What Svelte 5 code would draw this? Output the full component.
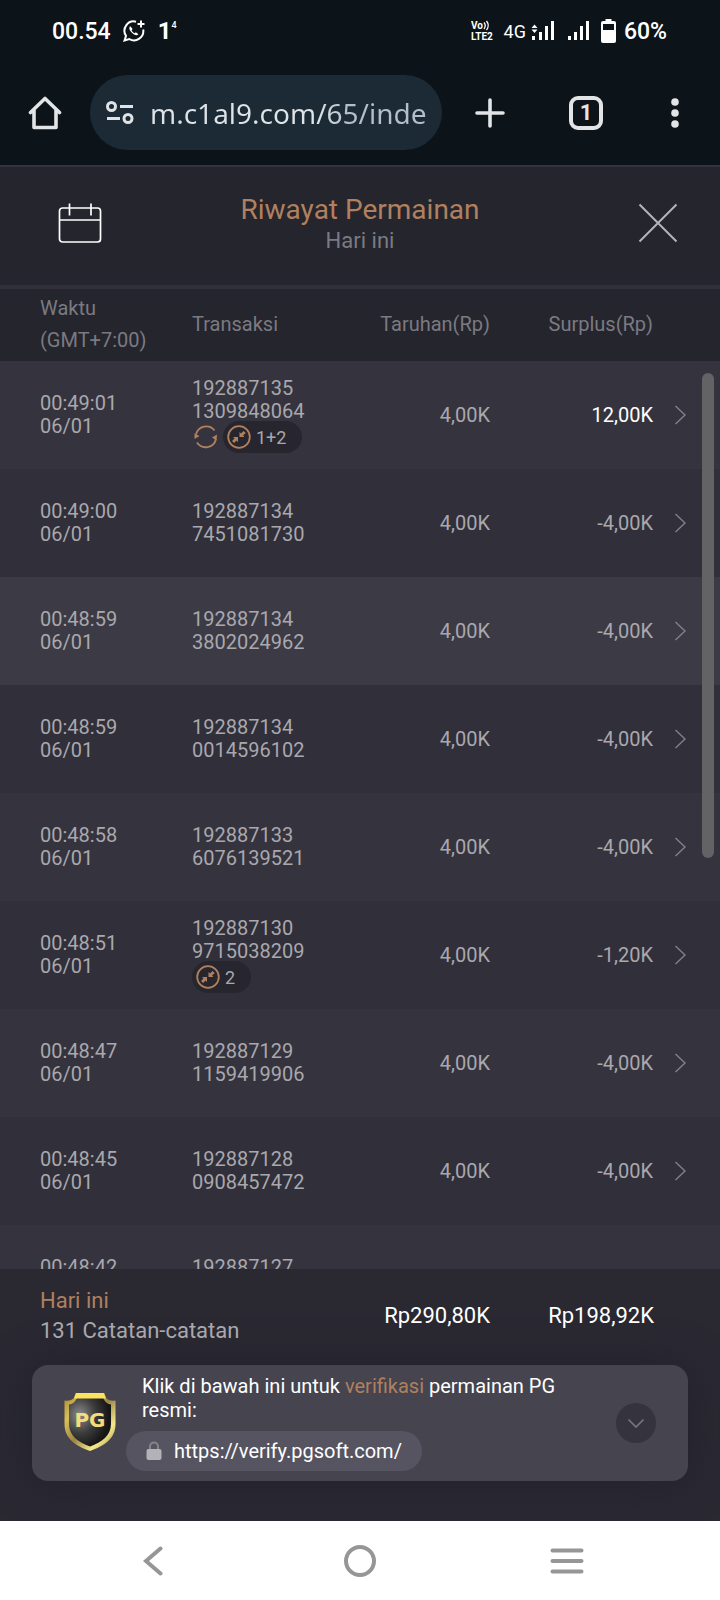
<script lang="ts">
  type Row = {
    time: string;
    date: string;
    id: [string, string];
    bet: string;
    profit: string;
    respin?: boolean;
    badge?: string;
  };

  const rows: Row[] = [
    { time: "00:49:01", date: "06/01", id: ["192887135", "1309848064"], bet: "4,00K", profit: "12,00K", respin: true, badge: "1+2" },
    { time: "00:49:00", date: "06/01", id: ["192887134", "7451081730"], bet: "4,00K", profit: "-4,00K" },
    { time: "00:48:59", date: "06/01", id: ["192887134", "3802024962"], bet: "4,00K", profit: "-4,00K" },
    { time: "00:48:59", date: "06/01", id: ["192887134", "0014596102"], bet: "4,00K", profit: "-4,00K" },
    { time: "00:48:58", date: "06/01", id: ["192887133", "6076139521"], bet: "4,00K", profit: "-4,00K" },
    { time: "00:48:51", date: "06/01", id: ["192887130", "9715038209"], bet: "4,00K", profit: "-1,20K", badge: "2" },
    { time: "00:48:47", date: "06/01", id: ["192887129", "1159419906"], bet: "4,00K", profit: "-4,00K" },
    { time: "00:48:45", date: "06/01", id: ["192887128", "0908457472"], bet: "4,00K", profit: "-4,00K" },
    { time: "00:48:42", date: "\u00a0", id: ["192887127", "\u00a0"], bet: "", profit: "" },
  ];

  let url = $state("m.c1al9.com/65/inde");
  let selected = $state(2);
</script>

<div class="screen">
  <div class="status-bar">
    <span class="clock">00.54</span>
    <svg class="whatsapp" width="22" height="22" viewBox="0 0 22 22" fill="none" stroke="#fff" stroke-width="2">
      <path d="M13 1.7A9.3 9.3 0 0 0 3 15.800L1.500 20.500L6.300 19A9.300 9.300 0 0 0 20.200 9.500" />
      <path d="M18 0.500v7M14.500 4h7" />
      <path d="M7.300 6.300c-1.800 1.500-.8 4.200 1.600 6.500s4.900 3.300 6.500 1.500l-2.500-2-1.300 1c-1.200-.5-2.500-1.800-3-3l1-1.200z" fill="#fff" stroke="none" />
    </svg>
    <span class="speed">1<sup>4</sup></span>

    <svg class="volte" width="25" height="22" viewBox="0 0 25 22">
      <text x="0" y="9">Vo</text>
      <text x="0" y="20">LTE2</text>
      <path d="M13 2.500q2.500 3 0 6.500M15.500 1q3.500 4.500 0 9" fill="none" stroke="#fff" stroke-width="1.300" />
    </svg>
    <span class="network">4G</span>
    <svg class="signal-a" width="22" height="20" viewBox="0 0 22 20" fill="#fff">
      <path d="M2.500 3.500l3 3.500h-6zM2.500 12l3-3.500h-6z" />
      <path d="M0 15h3v4H0zM7 11h3v8H7zM13 5h3v14h-3zM19 0h3v19h-3z" />
    </svg>
    <svg class="signal-b" width="22" height="20" viewBox="0 0 22 20" fill="#fff">
      <path d="M0 15h3v4H0zM6 11h3v8H6zM12 5h3v14h-3zM18 0h3v19h-3z" />
    </svg>
    <svg class="battery" width="15" height="24" viewBox="0 0 15 24">
      <rect x="4.500" y="0" width="6" height="4" fill="#fff" />
      <rect x="0" y="2" width="15" height="22" rx="2" fill="#fff" />
      <rect x="2" y="5" width="11" height="6" fill="#0c1319" />
    </svg>
    <span class="clock">60%</span>
  </div>

  <div class="toolbar">
    <button class="home" aria-label="Home">
      <svg width="34" height="36" viewBox="0 0 34 36" fill="none" stroke="#e2e4e6" stroke-width="3.600" stroke-linejoin="round" stroke-linecap="round">
        <path d="M2.500 17.500L17 3.500L31.500 17.500M6 15v17.500h22V15" />
      </svg>
    </button>
    <div class="omnibox">
      <svg width="28" height="26" viewBox="0 0 28 26" fill="none" stroke="#dfe3e6" stroke-width="3">
        <circle cx="5.500" cy="6.500" r="4" />
        <path d="M14 6.500h13M1 18.500h13" />
        <circle cx="22" cy="18.500" r="4" />
      </svg>
      <input aria-label="URL" bind:value={url} />
    </div>
    <button aria-label="New tab">
      <svg width="32" height="32" viewBox="0 0 32 32" stroke="#e2e4e6" stroke-width="3.600" stroke-linecap="round">
        <path d="M16 3v26M3 16h26" />
      </svg>
    </button>
    <button aria-label="Tabs"><span class="tab-count">1</span></button>
    <button class="more" aria-label="More">
      <svg width="8" height="32" viewBox="0 0 8 32" fill="#e2e4e6">
        <circle cx="4" cy="5" r="3.800" />
        <circle cx="4" cy="16" r="3.800" />
        <circle cx="4" cy="27" r="3.800" />
      </svg>
    </button>
  </div>

  <header>
    <button class="calendar" aria-label="Kalender">
      <svg width="44" height="40" viewBox="0 0 44 40" fill="none" stroke="#fff" stroke-width="1.700">
        <rect x="1.500" y="5" width="41" height="34" rx="3" />
        <path d="M1.500 17h41M11.500 0.500v12M33 0.500v12" />
      </svg>
    </button>
    <div class="heading">
      <h1>Riwayat Permainan</h1>
      <p>Hari ini</p>
    </div>
    <button class="close" aria-label="Tutup">
      <svg width="40" height="40" viewBox="0 0 40 40" stroke="#b4b3b8" stroke-width="2">
        <path d="M1.500 1.500l37 37M38.500 1.500l-37 37" />
      </svg>
    </button>
  </header>

  <main>
    <div class="scroller">
      <table>
        <colgroup>
          <col class="col-time" />
          <col />
          <col class="col-bet" />
          <col class="col-profit" />
          <col class="col-more" />
        </colgroup>
        <thead>
          <tr>
            <th>Waktu<br />(GMT+7:00)</th>
            <th>Transaksi</th>
            <th class="num">Taruhan(Rp)</th>
            <th class="num">Surplus(Rp)</th>
            <th></th>
          </tr>
        </thead>
        <tbody>
          {#each rows as row, i}
            <tr class:selected={selected === i}>
              <td>{row.time}<br />{row.date}</td>
              <td>
                {row.id[0]}<br />{row.id[1]}
                {#if row.badge}
                  <div class="features">
                    {#if row.respin}
                      <svg width="26" height="24" viewBox="0 0 26 24" fill="none" stroke="#b0805f" stroke-width="1.800">
                        <path d="M4 9.500A10.500 10.500 0 0 1 22.500 5.500M5 17.500A10.500 10.500 0 0 0 24 14" />
                        <path d="M2.500 8.500v5.500l5-3zM25 9.500l-5 3 4.500 3z" fill="#b0805f" stroke="none" />
                      </svg>
                    {/if}
                    <span class="badge">
                      <svg width="24" height="24" viewBox="0 0 24 24">
                        <circle cx="12" cy="12" r="10.800" fill="none" stroke="#b0805f" stroke-width="1.800" />
                        <path d="M12.500 7v5h5l-1.500-1.500 2.800-2.400-2.200-2.200-2.600 2.600zM11 17v-5H6l1.500 1.500-2.500 2.400 2.200 2.200 2.300-2.600z" fill="#b0805f" />
                      </svg>
                      {row.badge}
                    </span>
                  </div>
                {/if}
              </td>
              <td class="num">{row.bet}</td>
              <td class="num" class:win={row.profit && !row.profit.startsWith("-")}>{row.profit}</td>
              <td class="more-cell">
                <button aria-label="Detail" onclick={() => (selected = i)}>
                  <svg width="12" height="20" viewBox="0 0 12 20" fill="none" stroke="#828187" stroke-width="1.400">
                    <path d="M1.500 1l9.500 9L1.500 19" />
                  </svg>
                </button>
              </td>
            </tr>
          {/each}
        </tbody>
      </table>
    </div>
    <div class="thumb"></div>
  </main>

  <footer>
    <div class="summary">
      <p><span class="accent">Hari ini</span><br />131 Catatan-catatan</p>
      <span class="total">Rp290,80K</span>
      <span class="total">Rp198,92K</span>
    </div>

    <div class="verify">
      <svg class="shield" width="52" height="60" viewBox="0 0 52 60">
        <defs>
          <linearGradient id="gold" x1="0" y1="0" x2="1" y2="1">
            <stop offset="0" stop-color="#a8872c" />
            <stop offset="0.250" stop-color="#d9bf58" />
            <stop offset="0.500" stop-color="#9c8544" />
            <stop offset="0.750" stop-color="#f5e88d" />
            <stop offset="1" stop-color="#9b8340" />
          </linearGradient>
          <radialGradient id="steel" cx="0.250" cy="0.350" r="0.700">
            <stop offset="0" stop-color="#8c8c8c" />
            <stop offset="0.550" stop-color="#3b3b3b" />
            <stop offset="1" stop-color="#161616" />
          </radialGradient>
        </defs>
        <path d="M12 0H40L42.500 5.500Q46 8.500 51.500 7.500V31C51.500 46 40 53 26 58C12 53 0.500 46 0.500 31V7.500Q6 8.500 9.500 5.500Z" fill="url(#gold)" />
        <path d="M13 5H39Q42 11 47 11.500V31C47 42.500 38 49 26 53.500C14 49 5 42.500 5 31V11.500Q10 11 13 5Z" fill="url(#steel)" />
        <path d="M12 0H40L42 5.500H10Z" fill="#fbe35c" />
        <text x="26" y="34" text-anchor="middle">PG</text>
      </svg>
      <div class="verify-body">
        <p>Klik di bawah ini untuk <span class="accent">verifikasi</span> permainan PG resmi:</p>
        <a href="https://verify.pgsoft.com/">
          <svg width="16" height="20" viewBox="0 0 16 20">
            <path d="M4 9V5.500a4 4 0 0 1 8 0V9" fill="none" stroke="#85848c" stroke-width="2" />
            <rect x="0.500" y="8" width="15" height="11" rx="2" fill="#b3b2b8" />
          </svg>
          https://verify.pgsoft.com/
        </a>
      </div>
      <button class="collapse" aria-label="Sembunyikan">
        <svg width="18" height="12" viewBox="0 0 18 12" fill="none" stroke="#76757e" stroke-width="1.700">
          <path d="M1.500 2.500L9 10L16.500 2.500" />
        </svg>
      </button>
    </div>
  </footer>

  <nav>
    <button aria-label="Back">
      <svg width="20" height="30" viewBox="0 0 20 30"><path d="M17.500 2.500L3 15L17.500 27.500" /></svg>
    </button>
    <button aria-label="Home screen">
      <svg width="32" height="32" viewBox="0 0 32 32"><circle cx="16" cy="16" r="14" /></svg>
    </button>
    <button aria-label="Recent apps">
      <svg width="34" height="28" viewBox="0 0 34 28"><path d="M2.500 3.500h29M2.500 14h29M2.500 24.500h29" /></svg>
    </button>
  </nav>
</div>

<style>
  :global(body) {
    background: #25252e;
  }

  .screen {
    display: flex;
    flex-direction: column;
    height: 100vh;
    font-family: Roboto, "Liberation Sans", sans-serif;
    font-size: 20px;
    line-height: 23px;
    color: #a9a8ad;
  }

  button {
    display: flex;
    align-items: center;
    justify-content: center;
    padding: 0;
    border: none;
    background: none;
    font: inherit;
    color: inherit;
    cursor: pointer;
  }

  svg {
    display: block;
    flex: none;
  }

  h1,
  p {
    margin: 0;
    font-weight: 400;
  }

  .accent {
    color: #b0805f;
  }

  .status-bar {
    display: flex;
    align-items: center;
    flex: none;
    height: 58px;
    padding: 2px 53px 0 52px;
    background: #0c1319;
    color: #fff;
  }

  .clock {
    font-size: 23px;
    font-weight: 500;
  }

  .whatsapp {
    margin: 0 13px 0 12px;
  }

  .speed {
    display: flex;
    margin-right: auto;
    font-size: 24px;
    font-weight: 700;
  }

  .speed sup {
    font-size: 9px;
    line-height: 10px;
    font-weight: 500;
  }

  .volte text {
    font-size: 10px;
    font-weight: 700;
    fill: #fff;
  }

  .network {
    margin: 0 6px 0 8px;
    font-size: 18px;
    font-weight: 400;
  }

  .signal-a {
    overflow: visible;
    margin-right: 14px;
  }

  .battery {
    margin: 0 8px 0 11px;
  }

  .toolbar {
    display: flex;
    align-items: center;
    flex: none;
    height: 105px;
    padding-right: 4px;
    border-bottom: 2px solid #34333e;
    background: #0c1319;
  }

  .toolbar button {
    width: 96px;
    height: 75px;
  }

  .toolbar .home {
    width: 90px;
  }

  .toolbar .more {
    width: 82px;
  }

  .omnibox {
    display: flex;
    align-items: center;
    flex: 1;
    min-width: 0;
    height: 75px;
    box-sizing: border-box;
    padding: 0 12px 0 16px;
    gap: 16px;
    border-radius: 38px;
    background: #1b2a34;
  }

  .omnibox input {
    flex: 1;
    min-width: 0;
    padding: 0;
    border: none;
    outline: none;
    background: linear-gradient(90deg, #dde3e7 60%, #b3c0c7 70%);
    background-clip: text;
    color: transparent;
    font-family: "Noto Sans", "Open Sans", sans-serif;
    font-size: 28px;
    line-height: 40px;
  }

  .tab-count {
    width: 26px;
    height: 26px;
    border: 4px solid #e2e4e6;
    border-radius: 9px;
    font-size: 22px;
    line-height: 26px;
    font-weight: 700;
    color: #e2e4e6;
  }

  header {
    display: grid;
    grid-template-columns: 160px 1fr 160px;
    align-items: center;
    flex: none;
    height: 112px;
    padding-bottom: 6px;
    border-bottom: 4px solid #302f3a;
    background: #25252e;
  }

  .heading {
    padding-top: 4px;
    text-align: center;
  }

  .heading h1 {
    font-size: 28px;
    line-height: 32px;
    color: #b0805f;
  }

  .heading p {
    font-size: 22px;
    line-height: 30px;
    color: #7b7a81;
  }

  .close {
    justify-self: end;
    width: 124px;
  }

  main {
    position: relative;
    flex: 1;
    min-height: 0;
  }

  .scroller {
    height: 100%;
    overflow-y: auto;
    scrollbar-width: none;
  }

  .thumb {
    position: absolute;
    top: 84px;
    right: 6px;
    width: 12px;
    height: calc(50% - 5px);
    border-radius: 6px;
    background: #636265;
  }

  table {
    width: 100%;
    table-layout: fixed;
    border-collapse: collapse;
  }

  .col-time {
    width: 192px;
  }

  .col-bet {
    width: 150px;
  }

  .col-profit {
    width: 163px;
  }

  .col-more {
    width: 67px;
  }

  th,
  td {
    padding: 0;
    text-align: left;
    vertical-align: middle;
  }

  th {
    position: sticky;
    top: 0;
    height: 70px;
    padding-bottom: 2px;
    background: #25252e;
    font-weight: 400;
    line-height: 32px;
    color: #7b7a81;
  }

  th:first-child,
  td:first-child {
    padding-left: 40px;
  }

  td {
    height: 108px;
  }

  .num {
    text-align: right;
  }

  .win {
    color: #fff;
  }

  tbody tr {
    background: #302f3a;
  }

  tbody tr:nth-child(odd) {
    background: #35343e;
  }

  tbody tr.selected {
    background: #3c3b45;
  }

  .more-cell button {
    width: 54px;
    height: 60px;
  }

  .features {
    display: flex;
    align-items: center;
    gap: 5px;
    margin-top: -2px;
  }

  .badge {
    display: flex;
    align-items: center;
    gap: 5px;
    height: 32px;
    padding: 0 16px 0 4px;
    border-radius: 16px;
    background: #27262e;
    font-size: 18px;
  }

  footer {
    flex: none;
    padding-bottom: 40px;
    background: #2a2932;
  }

  .summary {
    display: grid;
    grid-template-columns: 1fr 163px 164px;
    align-items: center;
    height: 94px;
    padding: 0 66px 2px 40px;
    font-size: 22px;
    line-height: 30px;
  }

  .total {
    text-align: right;
    color: #fff;
  }

  .verify {
    display: flex;
    align-items: center;
    margin: 0 32px;
    padding: 9px 32px 10px;
    border-radius: 16px;
    background: #45444f;
    box-shadow: 0 0 40px #22222c;
    line-height: 24px;
    color: #fff;
  }

  .shield text {
    font-family: "DejaVu Sans", sans-serif;
    font-size: 20px;
    font-weight: 700;
    fill: #f3dd7c;
  }

  .verify-body {
    flex: 1;
    padding: 0 24px 0 26px;
  }

  .verify-body a {
    display: inline-flex;
    align-items: center;
    gap: 12px;
    height: 40px;
    margin: 9px 0 0 -16px;
    padding: 0 20px;
    border-radius: 20px;
    background: #555460;
    color: #fff;
    text-decoration: none;
    vertical-align: top;
  }

  .collapse {
    width: 40px;
    height: 40px;
    border-radius: 50%;
    background: #35343e;
  }

  nav {
    display: flex;
    flex: none;
    height: 79px;
    padding: 0 49px;
    background: #fff;
  }

  nav button {
    flex: 1;
  }

  nav svg {
    fill: none;
    stroke: #969696;
    stroke-width: 4;
    stroke-linecap: round;
  }
</style>
